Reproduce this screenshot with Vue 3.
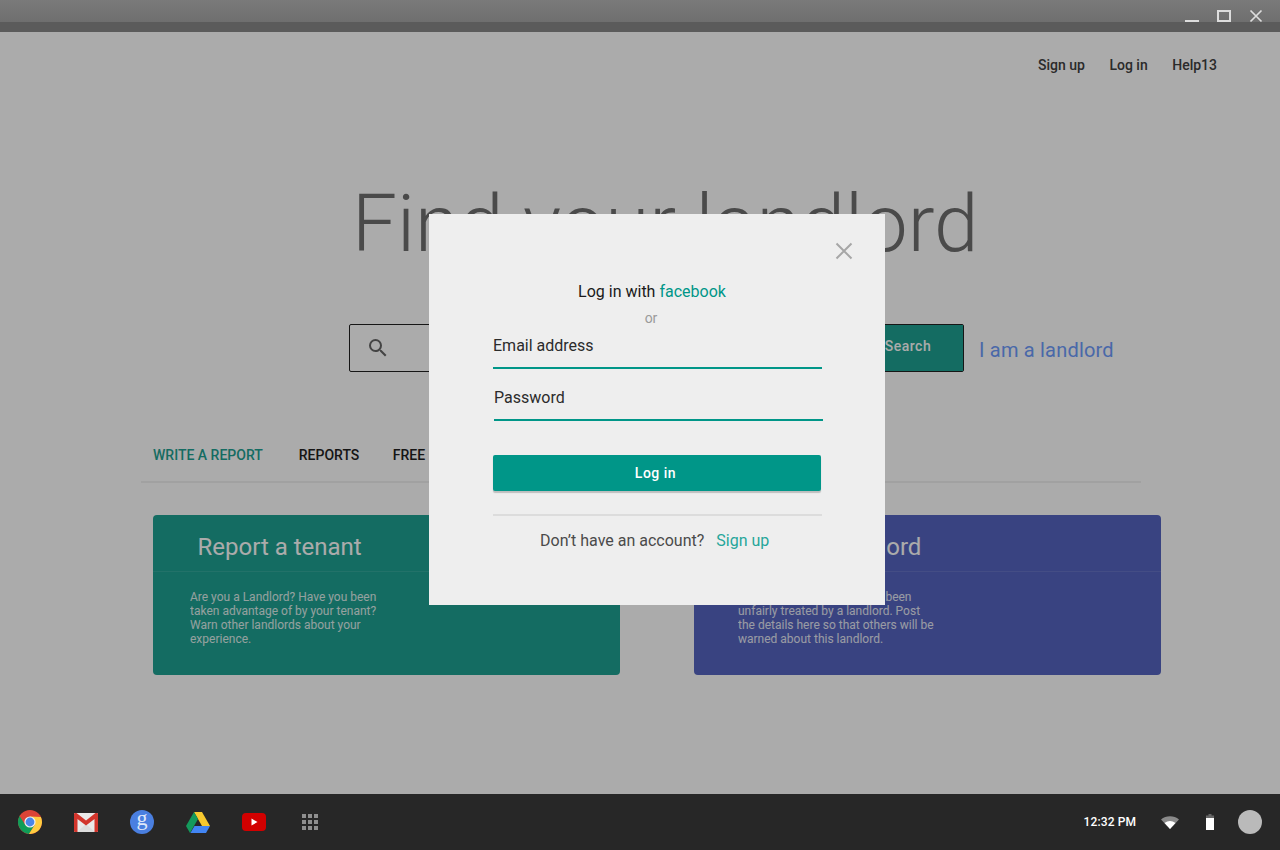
<script setup>
import { ref } from 'vue'

const navLinks = ['Sign up', 'Log in', 'Help13']
const tabs = ['WRITE A REPORT', 'REPORTS', 'FREE']
const cards = ref([
  {
    id: 'tenant',
    title: 'Report a tenant',
    text: 'Are you a Landlord? Have you been taken advantage of by your tenant? Warn other landlords about your experience.'
  },
  {
    id: 'landlord',
    title: 'Report a landlord',
    text: 'Are you a tenant? Have you been unfairly treated by a landlord. Post the details here so that others will be warned about this landlord.'
  }
])
const apps = [1, 2, 3, 4, 5, 6, 7, 8, 9]
</script>

<template>
  <div class="screen">
    <header class="titlebar">
      <div class="titlebar-top"></div>
      <div class="titlebar-strip"></div>
      <div class="win-controls">
        <span class="win-min"></span>
        <span class="win-max"></span>
        <svg class="win-close" width="14" height="14" viewBox="0 0 14 14">
          <path d="M1.500 1.500l11 11M12.500 1.500l-11 11" stroke="#ddd" stroke-width="1.700" fill="none" />
        </svg>
      </div>
    </header>

    <main class="page">
      <nav class="top-nav">
        <a v-for="link in navLinks" :key="link">{{ link }}</a>
      </nav>

      <h1 class="hero">Find your landlord</h1>

      <div class="search-row">
        <div class="search-box">
          <svg width="24" height="24" viewBox="0 0 24 24" class="search-icon">
            <path fill="#666" d="M15.500 14h-.79l-.28-.27A6.470 6.470 0 0 0 16 9.500 6.500 6.500 0 1 0 9.500 16c1.610 0 3.090-.59 4.230-1.570l.27.28v.79l5 4.990L20.490 19l-4.990-5zm-6 0C7.010 14 5 11.990 5 9.500S7.010 5 9.500 5 14 7.010 14 9.500 11.990 14 9.500 14z" />
          </svg>
          <button class="search-btn">Search</button>
        </div>
        <a class="landlord-link">I am a landlord</a>
      </div>

      <div class="tabs">
        <a v-for="(tab, i) in tabs" :key="tab" :class="['tab', { active: i === 0 }]">{{ tab }}</a>
      </div>

      <section class="cards">
        <article v-for="card in cards" :key="card.id" :class="['card', card.id]">
          <h2 class="card-title">{{ card.title }}</h2>
          <p class="card-text">{{ card.text }}</p>
        </article>
      </section>

      <div class="overlay"></div>

      <div class="modal">
        <svg class="modal-close" width="18" height="18" viewBox="0 0 18 18">
          <path d="M1.500 1.500l15 15M16.500 1.500l-15 15" stroke="#a6a6a6" stroke-width="2" fill="none" />
        </svg>
        <p class="fb-line"><span>Log in with</span><a>facebook</a></p>
        <p class="or">or</p>
        <div class="field">Email address</div>
        <div class="field field-pass">Password</div>
        <button class="login-btn">Log in</button>
        <div class="modal-foot">
          <span>Don’t have an account?</span>
          <a>Sign up</a>
        </div>
      </div>
    </main>

    <footer class="shelf">
      <div class="shelf-apps">
        <!-- chrome -->
        <svg width="24" height="24" viewBox="0 0 24 24">
          <circle cx="12" cy="12" r="12" fill="#db4437" />
          <path d="M1.600 6A12 12 0 0 0 11 23.960L16.850 14.800H7.100z" fill="#0f9d58" />
          <path d="M11 23.960A12 12 0 0 0 22.900 7L12 6.400l4.850 8.400z" fill="#ffcd40" />
          <circle cx="12" cy="12" r="5.600" fill="#f1f1f1" />
          <circle cx="12" cy="12" r="4.400" fill="#4a86e8" />
        </svg>
        <!-- gmail -->
        <svg width="24" height="19" viewBox="0 0 24 19">
          <rect width="24" height="19" rx="1" fill="#e9e9e9" />
          <path d="M3 19l9-8 9 8z" fill="#dcdcdc" />
          <path d="M0 1a1 1 0 0 1 1-1h1.500L12 7.600 21.500 0H23a1 1 0 0 1 1 1v17a1 1 0 0 1-1 1h-2.500V6L12 12.600 3.500 6v13H1a1 1 0 0 1-1-1z" fill="#d2352c" />
        </svg>
        <!-- google -->
        <svg width="24" height="24" viewBox="0 0 24 24">
          <circle cx="12" cy="12" r="12" fill="#4a7fe0" />
          <text x="12" y="15" text-anchor="middle" class="g-letter">g</text>
        </svg>
        <!-- drive -->
        <svg width="24" height="21" viewBox="0 0 24 21">
          <path d="M8 0h8l8 14h-8z" fill="#f7c92f" />
          <path d="M8 0l4 7-8 14-4-7z" fill="#149a5c" />
          <path d="M8.500 14H24l-4 7H4.400z" fill="#4285f4" />
        </svg>
        <!-- youtube -->
        <svg width="24" height="18" viewBox="0 0 24 18">
          <rect width="24" height="18" rx="4" fill="#d20000" />
          <path d="M9.500 5.500l6 3.500-6 3.500z" fill="#fff" />
        </svg>
        <div class="app-grid">
          <span v-for="n in apps" :key="n"></span>
        </div>
      </div>
      <div class="shelf-status">
        <span class="clock">12:32 PM</span>
        <svg class="wifi" width="18" height="14" viewBox="0 0 18 14">
          <path d="M0 4.500A14 14 0 0 1 18 4.500L9 14z" fill="#8a8a8a" />
          <path d="M3.500 8A9 9 0 0 1 14.500 8L9 14z" fill="#fff" />
        </svg>
        <svg class="battery" width="8" height="16" viewBox="0 0 8 16">
          <path d="M2.500 0h3v1.500H8V16H0V1.500h2.500z" fill="#666" />
          <rect y="4" width="8" height="12" fill="#fff" />
        </svg>
        <span class="avatar"></span>
      </div>
    </footer>
  </div>
</template>

<style scoped>
.screen {
  width: 1280px;
  height: 850px;
  display: flex;
  flex-direction: column;
  overflow: hidden;
  font-family: Roboto, "Liberation Sans", sans-serif;
}

.titlebar {
  position: relative;
  height: 32px;
  flex: none;
  background: #5b5b5b;
}
.titlebar-top {
  height: 22px;
  background: linear-gradient(#7a7a7a, #6f6f6f);
}
.titlebar-strip {
  height: 10px;
}
.win-controls {
  position: absolute;
  top: 0;
  right: 0;
}
.win-min {
  position: absolute;
  top: 20px;
  right: 81px;
  width: 14px;
  height: 2px;
  background: #ddd;
}
.win-max {
  position: absolute;
  top: 10px;
  right: 49px;
  width: 14px;
  height: 12px;
  box-sizing: border-box;
  border: 2px solid #ddd;
}
.win-close {
  position: absolute;
  top: 9px;
  right: 17px;
}

.page {
  position: relative;
  flex: 1;
  min-height: 0;
  background: #fff;
}

.top-nav {
  display: flex;
  justify-content: flex-end;
  gap: 24.500px;
  padding: 25px 63px 0 0;
  height: 16px;
  font-size: 14px;
  line-height: 16px;
  font-weight: 500;
  color: #404040;
}

.hero {
  margin: 101px 0 0 352px;
  font-size: 80px;
  line-height: 100px;
  font-weight: 300;
  color: #6f6f6f;
  white-space: nowrap;
}

.search-row {
  display: flex;
  align-items: center;
  margin: 50px 0 0 349px;
}
.search-box {
  width: 615px;
  height: 48px;
  box-sizing: border-box;
  border: 1px solid #222;
  border-radius: 2px;
  display: flex;
  align-items: center;
  justify-content: space-between;
  background: #fff;
}
.search-icon {
  margin-left: 16px;
}
.search-btn {
  width: 112px;
  height: 46px;
  border: 0;
  background: #1ea192;
  color: #fff;
  font: 500 14px Roboto, sans-serif;
  letter-spacing: 0.500px;
  padding: 0 0 4px 2px;
}
.landlord-link {
  margin: 4px 0 0 15px;
  font-size: 20px;
  color: #6e9cfc;
  letter-spacing: 0.200px;
}

.tabs {
  display: flex;
  gap: 33.500px;
  margin: 62px 0 0 141px;
  width: 1000px;
  box-sizing: border-box;
  height: 49px;
  padding: 13px 0 0 12px;
  border-bottom: 2px solid #f0f0f0;
  font-size: 14px;
  line-height: 16px;
  font-weight: 500;
  color: #222;
}
.tab.active {
  color: #1ea192;
  margin-right: 2.500px;
}

.cards {
  display: flex;
  gap: 74px;
  margin: 32px 0 0 153px;
}
.card {
  width: 467px;
  height: 160px;
  border-radius: 4px;
  color: #fff;
}
.card.tenant {
  background: #1ea192;
}
.card.landlord {
  background: #5565c0;
}
.card-title {
  margin: 0;
  height: 57px;
  box-sizing: border-box;
  padding: 16px 0 0 44.500px;
  font-size: 24px;
  line-height: 32px;
  font-weight: 400;
  border-bottom: 1px solid rgba(255, 255, 255, 0.1);
}
.card-text {
  margin: 18px 0 0 37px;
  width: 200px;
  font-size: 12px;
  line-height: 14px;
  opacity: 0.85;
}
.card.landlord .card-text {
  margin-left: 44px;
}

.overlay {
  position: absolute;
  inset: 0;
  background: rgba(0, 0, 0, 0.33);
}

.modal {
  position: absolute;
  left: 429px;
  top: 182px;
  width: 456px;
  height: 391px;
  box-sizing: border-box;
  padding: 68px 63px 0 64px;
  background: #eee;
  color: #222;
}
.modal-close {
  position: absolute;
  top: 28px;
  right: 32px;
}
.fb-line {
  margin: 0;
  display: flex;
  justify-content: center;
  gap: 4px;
  font-size: 16px;
  line-height: 20px;
  color: #1a1a1a;
  padding-right: 11px;
}
.fb-line a {
  color: #009688;
}
.or {
  margin: 8px 0 0;
  font-size: 14px;
  line-height: 16px;
  text-align: center;
  color: #9a9a9a;
  padding-right: 13px;
}
.field {
  height: 31px;
  margin-top: 10px;
  border-bottom: 2px solid #009688;
  font-size: 16px;
  line-height: 20px;
  color: #2b2b2b;
}
.field-pass {
  margin: 19px -1px 0 1px;
}
.login-btn {
  display: block;
  width: 328px;
  height: 36px;
  margin-top: 34px;
  border: 0;
  border-radius: 2px;
  background: #009688;
  color: #fff;
  font: 500 14px Roboto, sans-serif;
  letter-spacing: 0.500px;
  box-shadow: 0 2px 1px rgba(0, 0, 0, 0.2);
  padding: 0 3px 0 0;
}
.modal-foot {
  margin-top: 23px;
  border-top: 2px solid #dcdcdc;
  padding: 15px 0 0 47px;
  display: flex;
  gap: 12px;
  font-size: 16px;
  line-height: 20px;
  color: #4a4a4a;
}
.modal-foot a {
  color: #26a69a;
}

.shelf {
  height: 56px;
  flex: none;
  background: #272727;
  display: flex;
  align-items: center;
  justify-content: space-between;
}
.shelf-apps {
  display: flex;
  align-items: center;
  gap: 32px;
  margin-left: 18px;
}
.g-letter {
  font-family: "Liberation Serif", serif;
  font-size: 22px;
  fill: #dfe8fa;
}
.app-grid {
  display: grid;
  grid-template-columns: repeat(3, 4px);
  grid-auto-rows: 4px;
  gap: 2px;
  margin-left: 4px;
}
.app-grid span {
  background: #8f8f8f;
}
.shelf-status {
  display: flex;
  align-items: center;
  margin-right: 18px;
}
.clock {
  font-size: 12px;
  font-weight: 500;
  letter-spacing: 0.100px;
  color: #fff;
  white-space: nowrap;
}
.wifi {
  margin-left: 25px;
}
.battery {
  margin-left: 27px;
}
.avatar {
  width: 24px;
  height: 24px;
  border-radius: 50%;
  background: #bababa;
  margin-left: 24px;
}
</style>
